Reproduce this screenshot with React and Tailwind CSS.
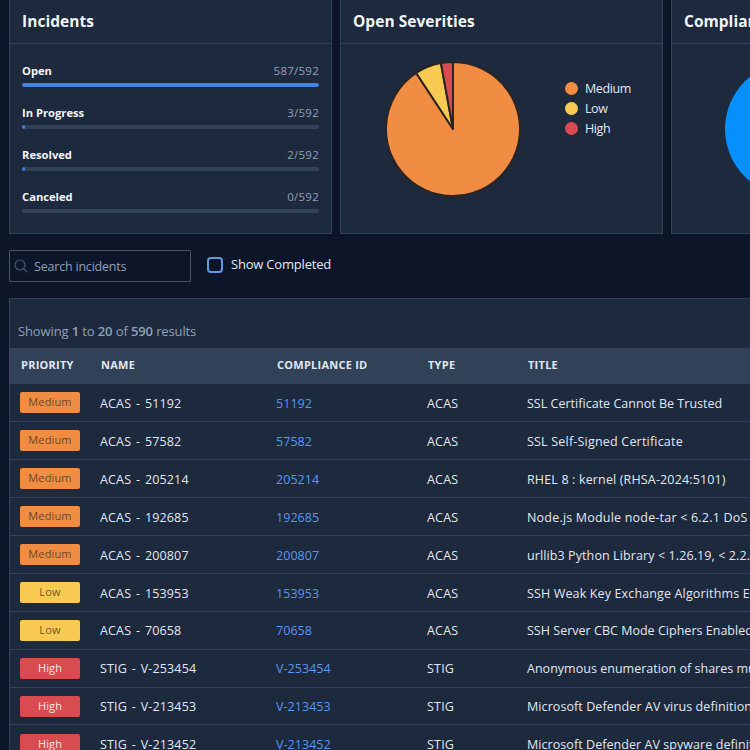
import clsx from 'clsx'

const progress = [
  { label: 'Open', count: 587, bar: 297 },
  { label: 'In Progress', count: 3, bar: 3 },
  { label: 'Resolved', count: 2, bar: 3 },
  { label: 'Canceled', count: 0, bar: 0 },
]

const legend = [
  { label: 'Medium', color: 'bg-[#f08d43]' },
  { label: 'Low', color: 'bg-[#f8ca52]' },
  { label: 'High', color: 'bg-[#d84b50]' },
]

const incidents = [
  { priority: 'Medium', type: 'ACAS', id: '51192', title: 'SSL Certificate Cannot Be Trusted', tracking: 'tracking-[0.02px]' },
  { priority: 'Medium', type: 'ACAS', id: '57582', title: 'SSL Self-Signed Certificate', tracking: 'tracking-[0.2px]' },
  { priority: 'Medium', type: 'ACAS', id: '205214', title: 'RHEL 8 : kernel (RHSA-2024:5101)', tracking: 'tracking-[0.15px]' },
  { priority: 'Medium', type: 'ACAS', id: '192685', title: 'Node.js Module node-tar < 6.2.1 DoS', tracking: 'tracking-[0.2px]' },
  { priority: 'Medium', type: 'ACAS', id: '200807', title: 'urllib3 Python Library < 1.26.19, < 2.2.2', tracking: 'tracking-[0.1px]' },
  { priority: 'Low', type: 'ACAS', id: '153953', title: 'SSH Weak Key Exchange Algorithms Enabled', tracking: 'tracking-[0.14px]' },
  { priority: 'Low', type: 'ACAS', id: '70658', title: 'SSH Server CBC Mode Ciphers Enabled', tracking: 'tracking-[0.02px]' },
  { priority: 'High', type: 'STIG', id: 'V-253454', title: 'Anonymous enumeration of shares must be restricted', tracking: 'tracking-[0.02px]' },
  { priority: 'High', type: 'STIG', id: 'V-213453', title: 'Microsoft Defender AV virus definition', tracking: 'tracking-[0.08px]' },
  { priority: 'High', type: 'STIG', id: 'V-213452', title: 'Microsoft Defender AV spyware definition', tracking: 'tracking-[0.06px]' },
]

const badgeStyles = {
  Medium: 'bg-[#f08d43] text-[#70452a]',
  Low: 'bg-[#f8ca52] text-[#6b5a2c]',
  High: 'bg-[#d84b50] text-[#f8e6e9] font-medium',
}

const columns = 'grid grid-cols-[91px_176px_151px_100px_400px] items-center'

function Card({ title, className, children }) {
  return (
    <section className={clsx('h-[234px] shrink-0 border border-t-0 border-slate-700 bg-slate-800', className)}>
      <h2 className="flex h-[44px] items-center border-b border-slate-700 px-3 text-[15.5px] font-bold tracking-[0.03px] text-[#f1f5f9] whitespace-nowrap">
        {title}
      </h2>
      {children}
    </section>
  )
}

function SeverityPie() {
  return (
    <svg width="138" height="138" viewBox="-69 -69 138 138" stroke="#2b2422" strokeWidth="2" strokeLinejoin="round">
      <path d="M0 0V-67A67 67 0 1 1 -36.8 -56Z" fill="#f08d43" />
      <path d="M0 0L-36.8 -56A67 67 0 0 1 -12.1 -65.9Z" fill="#f8ca52" />
      <path d="M0 0L-12.1 -65.9A67 67 0 0 1 0 -67Z" fill="#d84b50" />
    </svg>
  )
}

export default function App() {
  return (
    <div className="h-[750px] w-[750px] overflow-hidden bg-[#0d1529] pl-[9px] font-['Open_Sans','Noto_Sans',sans-serif] text-slate-200">
      {/* Summary cards */}
      <div className="flex gap-2">
        <Card title="Incidents" className="w-[323px]">
          <div className="flex flex-col px-3 pt-4">
            {progress.map(({ label, count, bar }) => (
              <div key={label} className="h-[42.1px]">
                <div className="flex h-[23px] items-start justify-between text-[11.2px] leading-[22px]">
                  <span className="font-bold text-slate-100">{label}</span>
                  <span className="text-[11.5px] leading-[21px] font-medium tracking-[0.25px] text-slate-400">{count}/592</span>
                </div>
                <div className="h-1 w-[297px] overflow-hidden rounded-full bg-slate-700">
                  <div className="h-full rounded-full bg-[#4683e4]" style={{ width: bar }} />
                </div>
              </div>
            ))}
          </div>
        </Card>

        <Card title="Open Severities" className="w-[323px]">
          <div className="flex pt-4 pl-[43px]">
            <SeverityPie />
            <ul className="mt-[18px] ml-[43px]">
              {legend.map(({ label, color }) => (
                <li key={label} className="flex h-5 items-center gap-[7px] text-[12.5px] tracking-[-0.4px]">
                  <span className={clsx('size-[13px] rounded-full', color)} />
                  <span className="pt-[3px]">{label}</span>
                </li>
              ))}
            </ul>
          </div>
        </Card>

        <Card title="Compliance" className="w-[323px]">
          <div className="pt-[18px] pl-[53px]">
            <div className="size-[134px] rounded-full bg-[#0590fb]" />
          </div>
        </Card>
      </div>

      {/* Filters */}
      <div className="mt-4 flex items-start">
        <label className="flex h-8 w-[182px] items-center rounded-[1px] border border-slate-600 pl-1">
          <svg className="size-[14px] text-slate-600" viewBox="0 0 14 14" fill="none" stroke="currentColor" strokeWidth="1.2">
            <circle cx="6" cy="6" r="5" />
            <path d="M9.5 9.5L13.3 13.3" />
          </svg>
          <input
            placeholder="Search incidents"
            className="ml-[6px] w-[140px] bg-transparent pt-[3px] text-[12.5px] tracking-[-0.2px] outline-none placeholder:text-slate-400"
          />
        </label>
        <label className="ml-4 flex h-[30px] items-center gap-2 text-[13px] tracking-[-0.2px]">
          <span className="size-4 rounded-[4px] border-2 border-[#6797df]" />
          Show Completed
        </label>
      </div>

      {/* Incident table */}
      <div className="mt-4 h-[500px] w-[960px] border border-slate-700 bg-slate-800">
        <p className="flex h-[49px] items-end pb-[7px] pl-2 text-[13px] tracking-[-0.12px] text-slate-400">
          <span className="whitespace-pre">
            Showing <b className="font-semibold">1</b> to <b className="font-semibold">20</b> of{' '}
            <b className="font-semibold">590</b> results
          </span>
        </p>
        <div className={clsx(columns, 'h-9 bg-slate-700 pb-[2px] text-[11px] font-bold tracking-[0.25px] text-slate-200 whitespace-nowrap')}>
          <span className="pl-[11px]">PRIORITY</span>
          <span>NAME</span>
          <span>COMPLIANCE ID</span>
          <span>TYPE</span>
          <span>TITLE</span>
        </div>
        {incidents.map(({ priority, type, id, title, tracking }) => (
          <div
            key={id}
            className={clsx(columns, 'h-[37.95px] border-b border-slate-700 text-[12.5px] font-medium whitespace-nowrap')}
          >
            <span
              className={clsx(
                'mt-px ml-[10px] flex h-[21px] w-[60px] items-center justify-center rounded-[2px] pb-px text-[11px] font-normal tracking-[0.15px]',
                badgeStyles[priority]
              )}
            >
              {priority}
            </span>
            <span className="-ml-px pt-[3.5px] tracking-[0.15px] [word-spacing:1.4px]">{type} - {id}</span>
            <a className="-ml-px pt-[3.5px] tracking-[0.05px] text-[#5a96ee]">{id}</a>
            <span className="-ml-px pt-[3.5px] tracking-[0.2px]">{type}</span>
            <span className={clsx('-ml-px pt-[3.5px]', tracking)}>{title}</span>
          </div>
        ))}
      </div>
    </div>
  )
}
